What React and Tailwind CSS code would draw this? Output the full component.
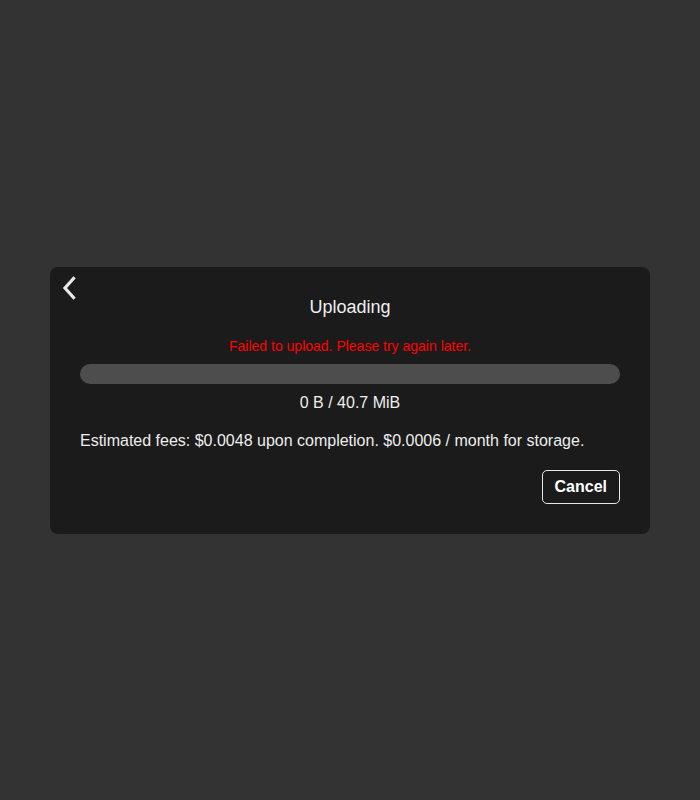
export default function App() {
  return (
    <div className="min-h-[800px] w-full bg-[#333333] flex items-center justify-center" style={{ fontFamily: '"Liberation Sans", Arial, sans-serif' }}>
      <div className="relative w-[600px] h-[267px] bg-[#1b1b1b] rounded-lg px-[30px] pt-[29px] flex flex-col">
        <button className="absolute left-[10px] top-[8px] w-[18px] h-[26px] flex items-center justify-center text-[#e8e8e8]">
          <svg width="16" height="26" viewBox="0 0 16 26" fill="none" stroke="currentColor" strokeWidth="3.2" strokeLinecap="square" strokeLinejoin="miter">
            <path d="M12.5 3.5 L4 13 L12.5 22.5" />
          </svg>
        </button>
        <div className="text-center text-[18px] leading-[22px] text-[#eeeeee]">Uploading</div>
        <div className="mt-[20px] text-center text-[14px] leading-[16px] text-[#ff0000]">Failed to upload. Please try again later.</div>
        <div className="mt-[10px] h-[20px] w-full rounded-full bg-[#4d4d4d]"></div>
        <div className="mt-[9px] text-center text-[16px] leading-[20px] text-[#eeeeee]">0 B / 40.7 MiB</div>
        <div className="mt-[18px] text-[16px] leading-[20px] text-[#eeeeee]">Estimated fees: $0.0048 upon completion. $0.0006 / month for storage.</div>
        <div className="mt-[19px] flex justify-end">
          <button className="h-[34px] px-[12px] border border-[#e8e8e8] rounded-[5px] text-[16px] font-bold text-[#ffffff]">Cancel</button>
        </div>
      </div>
    </div>
  );
}
